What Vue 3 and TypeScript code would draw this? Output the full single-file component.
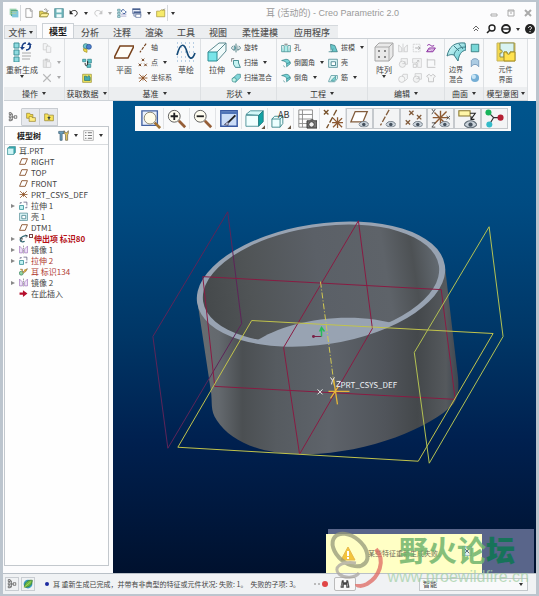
<script setup lang="ts">
import { ref } from 'vue'

interface Cmd { icon: string; label?: string; caret?: boolean; dim?: boolean; name?: string }
interface Block { big?: Cmd; list?: Cmd[]; lines?: string[] }
interface Group { title: string; caret: boolean; kind: string; blocks: Block[] }

const quick: Cmd[] = [
  { icon: 'brand', name: '应用' }, { icon: 'new', name: '新建' }, { icon: 'open', name: '打开' }, { icon: 'save', name: '保存' },
  { icon: 'undo', name: '撤消', caret: true }, { icon: 'redo', name: '重做', caret: true, dim: true },
  { icon: 'regen', name: '重新生成' }, { icon: 'windows', name: '窗口', caret: true }, { icon: 'folder', name: '关闭' },
]

const tabs = ['模型', '分析', '注释', '渲染', '工具', '视图', '柔性建模', '应用程序']
const activeTab = ref('模型')

const groups: Group[] = [
  { title: '操作', caret: true, kind: 'ops', blocks: [
    { big: { icon: 'regenbig', caret: true }, lines: ['重新生成'] },
    { list: [{ icon: 'copy', dim: true, name: '复制' }, { icon: 'paste', dim: true, caret: true, name: '粘贴' }, { icon: 'cross', dim: true, caret: true, name: '删除' }] },
  ] },
  { title: '获取数据', caret: true, kind: 'data', blocks: [
    { list: [{ icon: 'udf', name: '用户定义特征' }, { icon: 'copygeom', name: '复制几何' }, { icon: 'shrink', name: '收缩包络' }] },
  ] },
  { title: '基准', caret: true, kind: 'datum', blocks: [
    { big: { icon: 'planebig' }, lines: ['平面'] },
    { list: [{ icon: 'axis', label: '轴' }, { icon: 'points', label: '点', caret: true }, { icon: 'csys', label: '坐标系' }] },
    { big: { icon: 'sketch' }, lines: ['草绘'] },
  ] },
  { title: '形状', caret: true, kind: 'shape', blocks: [
    { big: { icon: 'extrudebig' }, lines: ['拉伸'] },
    { list: [{ icon: 'revolve', label: '旋转' }, { icon: 'sweep', label: '扫描', caret: true }, { icon: 'blend', label: '扫描混合' }] },
  ] },
  { title: '工程', caret: true, kind: 'eng', blocks: [
    { list: [{ icon: 'hole', label: '孔' }, { icon: 'round', label: '倒圆角', caret: true }, { icon: 'round', label: '倒角', caret: true }] },
    { list: [{ icon: 'draft', label: '拔模', caret: true }, { icon: 'shell', label: '壳' }, { icon: 'rib', label: '筋', caret: true }] },
  ] },
  { title: '编辑', caret: true, kind: 'edit', blocks: [
    { big: { icon: 'pattern', caret: true }, lines: ['阵列'] },
    { list: [{ icon: 'mirror', dim: true, name: '镜像' }, { icon: 'merge', dim: true, name: '合并' }, { icon: 'intersect', dim: true, name: '相交' }] },
    { list: [{ icon: 'extend', dim: true, name: '延伸' }, { icon: 'offset', dim: true, name: '偏移' }, { icon: 'merge', dim: true, name: '加厚' }] },
    { list: [{ icon: 'project', name: '投影' }, { icon: 'trim', dim: true, name: '修剪' }, { icon: 'solidify', dim: true, name: '实体化' }] },
  ] },
  { title: '曲面', caret: true, kind: 'surf', blocks: [
    { big: { icon: 'boundary' }, lines: ['边界', '混合'] },
    { list: [{ icon: 'fill', name: '填充' }, { icon: 'style', name: '造型' }, { icon: 'sphere', name: '自由式' }] },
  ] },
  { title: '模型意图', caret: true, kind: 'intent', blocks: [
    { big: { icon: 'component' }, lines: ['元件', '界面'] },
  ] },
]

const viewTools = [
  ['fit', '重新调整'], ['zoomin', '放大'], ['zoomout', '缩小'], ['repaint', '重画'], ['display', '显示样式'],
  ['views', '已命名视图'], ['manager', '视图管理器'], ['datums', '基准显示'], ['showplane', '平面显示'],
  ['showaxis', '轴显示'], ['showpoint', '点显示'], ['showcsys', '坐标系显示'], ['shownote', '注释显示'], ['spin', '旋转中心'],
]

interface Node { icon: string; text: string; fold?: boolean; state?: 'failed' | 'child' }
const nodes: Node[] = [
  { icon: 'plane', text: 'RIGHT' }, { icon: 'plane', text: 'TOP' }, { icon: 'plane', text: 'FRONT' },
  { icon: 'csys', text: 'PRT_CSYS_DEF' }, { icon: 'extrude', text: '拉伸 1', fold: true }, { icon: 'shell', text: '壳 1' },
  { icon: 'plane', text: 'DTM1' }, { icon: 'protrusion', text: '伸出项 标识80', fold: true, state: 'failed' },
  { icon: 'mirrortree', text: '镜像 1', fold: true }, { icon: 'extrude', text: '拉伸 2', fold: true, state: 'child' },
  { icon: 'ear', text: '耳 标识134', state: 'child' }, { icon: 'mirrortree', text: '镜像 2', fold: true }, { icon: 'insert', text: '在此插入' },
]
const filter = ref('智能')
const notice = ref(true)
</script>

<template>
  <svg class="defs" aria-hidden="true">
    <defs>
      <linearGradient id="cyan" x1="0" y1="0" x2="1" y2="1"><stop offset="0" stop-color="#e4ffff" /><stop offset="1" stop-color="#55c4cc" /></linearGradient>
      <symbol id="brand" viewBox="0 0 16 16"><path d="M1 1h11v10H1z" fill="#9fd4b0" /><path d="M3 3h11v10H3z" fill="#58a888" /><path d="M5 5h10v10H5z" fill="#7fc7dd" /><path d="M3 6h9M3 9h9" stroke="#c5d98a" /></symbol>
      <symbol id="new" viewBox="0 0 16 16"><path d="M3 1h7l3 3v11H3z" fill="#fff" stroke="#777" /><path d="M10 1v4h3" fill="none" stroke="#777" /></symbol>
      <symbol id="open" viewBox="0 0 16 16"><path d="M1 14V5h5l1 2h6v7z" fill="#e6d45c" stroke="#7d742a" /><path d="M1 14l3-5h12l-3 5z" fill="#fff3a0" stroke="#7d742a" /><path d="M8 3c3-3 5-1 5 2m-2-1 2 2 2-2" fill="none" stroke="#555" /></symbol>
      <symbol id="save" viewBox="0 0 16 16"><path d="M1 1h14v14H1z" fill="#6fb5bb" stroke="#3d7f88" /><path d="M4 2h8v5H4zM4 10h8v5H4z" fill="#f1fbfb" /></symbol>
      <symbol id="undo" viewBox="0 0 16 16"><path d="M2 8c3-6 12-5 11 1-1 3-3 4-4 4" fill="none" stroke="#222" stroke-width="1.6" /><path d="M1 3v7h6z" fill="#222" /></symbol>
      <symbol id="redo" viewBox="0 0 16 16"><path d="M14 8C11 2 2 3 3 9c1 3 3 4 4 4" fill="none" stroke="#777" stroke-width="1.6" /><path d="M15 3v7H9z" fill="#777" /></symbol>
      <symbol id="regen" viewBox="0 0 16 16"><path d="M1 2h4v3H1zM1 7h4v3H1zM1 12h4v3H1z" fill="#bde6ec" stroke="#45808c" /><path d="M7 6c0-4 4-4 5-2M14 5c1 4-3 5-5 3" fill="none" stroke="#234b8f" stroke-width="1.6" /><path d="M6 10h9M6 13h9" stroke="#88b" /></symbol>
      <symbol id="windows" viewBox="0 0 16 16"><path d="M1 1h12v8H1zM3 6h11v7H3z" fill="#e8edf7" stroke="#496191" /><path d="M1 2h12M3 7h11" stroke="#496191" stroke-width="2" /><path d="M6 10h8v5H6z" fill="#fff" stroke="#496191" /></symbol>
      <symbol id="folder" viewBox="0 0 16 16"><path d="M1 14V5h5l2-2h6v11z" fill="#f6ea6a" stroke="#9b8a2a" /><path d="M11 4l3-3" stroke="#555" /></symbol>
      <symbol id="regenbig" viewBox="0 0 20 20"><path d="M2 1h5v5H2zM2 8h5v5H2zM2 15h5v5H2z" fill="#8fdbe0" stroke="#3c9098" /><path d="M10 6c0-4 2-5 4-5M18 2c1 4-1 6-4 6" fill="none" stroke="#1b3f86" stroke-width="1.6" /><path d="M8 5h5l-3 3zM15 3h5l-3-3z" fill="#1b3f86" /><path d="M10 11h9M10 14h9M10 17h8" stroke="#aaa" /></symbol>
      <symbol id="copy" viewBox="0 0 16 16"><path d="M2 1h5l2 2v8H2z" fill="#eee" stroke="#777" /><path d="M7 5h5l2 2v8H7z" fill="#eee" stroke="#777" /></symbol>
      <symbol id="paste" viewBox="0 0 16 16"><path d="M2 3h10v12H2z" fill="#ccc" stroke="#777" /><path d="M5 1h4v3H5z" fill="#777" /><path d="M7 6h5l2 2v7H7z" fill="#f4f4f4" stroke="#777" /></symbol>
      <symbol id="cross" viewBox="0 0 16 16"><path d="M2 2l12 12M14 2L2 14" stroke="#555" stroke-width="1.7" /></symbol>
      <symbol id="udf" viewBox="0 0 16 16"><circle cx="6" cy="5" r="4" fill="#6ec5cb" stroke="#226a72" /><circle cx="11" cy="6" r="4" fill="#4b7fd0" stroke="#234a85" /><path d="M2 9l6 1v5l-5-2z" fill="#f4e050" stroke="#94851d" /></symbol>
      <symbol id="copygeom" viewBox="0 0 16 16"><path d="M1 2h5v4H1zM9 2h6v6H9zM8 10h6v5H8z" fill="#5cc2c8" stroke="#23767e" /><path d="M5 8c0 5 2 6 4 2M9 5v5" fill="none" stroke="#222" stroke-width="1.5" /></symbol>
      <symbol id="shrink" viewBox="0 0 16 16"><path d="M1 2h14v13H1z" fill="#f0e65e" stroke="#90862c" /><path d="M4 5h3l1 2 3-3 2 3v5H4z" fill="#44a9ad" stroke="#1f6a70" /></symbol>
      <symbol id="planebig" viewBox="0 0 20 20"><path d="M6 4h14l-6 12H0z" fill="#fffdf8" stroke="#79431d" stroke-width="1.6" /></symbol>
      <symbol id="plane" viewBox="0 0 16 16"><path d="M5 3h10l-4 10H1z" fill="#fff" stroke="#87502a" stroke-width="1.6" /></symbol>
      <symbol id="axis" viewBox="0 0 16 16"><path d="M13 1L3 15" stroke="#74431f" stroke-width="1.8" stroke-dasharray="5 2" /></symbol>
      <symbol id="points" viewBox="0 0 16 16"><path d="M6 1l4 4m0-4L6 5M1 9l4 4m0-4l-4 4M10 9l4 4m0-4l-4 4" stroke="#74431f" stroke-width="1.6" /></symbol>
      <symbol id="csys" viewBox="0 0 16 16"><path d="M2 2l12 12M14 2L2 14M1 8h14M8 4v8" stroke="#8b4c1e" stroke-width="1.4" /></symbol>
      <symbol id="sketch" viewBox="0 0 20 20"><path d="M1 1h18M1 5h18M1 10h18M1 15h18M1 19h18" stroke="#7aa6cf" stroke-dasharray="1 3" /><path d="M1 13C5-2 9 3 11 10s5 9 8 1" fill="none" stroke="#164b78" stroke-width="1.7" /></symbol>
      <symbol id="extrudebig" viewBox="0 0 20 20"><path d="M1 10L12 1h7v8l-9 10" fill="#f1fbfb" stroke="#5b8a90" /><path d="M10 10l9-9" stroke="#5b8a90" /><path d="M1 10h9v9H1z" fill="#79e5e9" stroke="#2c8d94" /></symbol>
      <symbol id="extrude" viewBox="0 0 16 16"><path d="M1 8h7v7H1z" fill="#c4f3f4" stroke="#25858c" stroke-width="1.3" /><path d="M2 5V3h3M8 2h6v6M14 10v2h-3" fill="none" stroke="#557" stroke-width="1.3" /></symbol>
      <symbol id="revolve" viewBox="0 0 16 16"><path d="M3 5c-4 3-1 6 2 6M13 5c4 3 1 6-3 6M8 1v14" fill="none" stroke="#47777d" stroke-width="1.5" /><path d="M5 4l3 4-3 4zM11 4v8" fill="#77c6cb" stroke="#47777d" /></symbol>
      <symbol id="sweep" viewBox="0 0 16 16"><path d="M4 4h8v4l3 7H7L4 10z" fill="#c6f3f2" stroke="#287b81" stroke-width="1.3" /><path d="M1 1h4M1 1v5" stroke="#444" /></symbol>
      <symbol id="blend" viewBox="0 0 16 16"><path d="M2 9l8-7h5v5l-8 8z" fill="#81d5d8" stroke="#2a7e84" /><circle cx="5" cy="11" r="3.5" fill="#bdf4e6" stroke="#2a7e84" /></symbol>
      <symbol id="hole" viewBox="0 0 16 16"><path d="M1 4h4v10h6V4h4M1 4v10h4M15 4v10h-4" fill="#afeeea" stroke="#287b81" /><path d="M5 2h6M8 1v4" stroke="#666" /></symbol>
      <symbol id="round" viewBox="0 0 16 16"><path d="M1 4l7-2c5 0 7 4 7 7l-6 5V9C9 6 5 5 1 4z" fill="#77d4d6" stroke="#24757c" /><path d="M9 9l6-2M4 12l2 3" stroke="#24757c" /></symbol>
      <symbol id="draft" viewBox="0 0 16 16"><path d="M4 2l7 2 4 10H5z" fill="#69c7ca" stroke="#22676e" /><path d="M1 14h5l2-5" fill="#cdeff0" stroke="#22676e" /></symbol>
      <symbol id="shell" viewBox="0 0 16 16"><path d="M1 2h14v13H1z" fill="#ddf6f7" stroke="#45818b" stroke-width="1.2" /><path d="M5 6h7v6H5z" fill="#fff" stroke="#45818b" stroke-width="1.4" /></symbol>
      <symbol id="rib" viewBox="0 0 16 16"><path d="M1 13l4-9h10v5l-4 5H1z" fill="#def7f5" stroke="#34818a" /><path d="M5 12l7-7v5l-3 3z" fill="#7fd5d0" stroke="#34818a" /></symbol>
      <symbol id="pattern" viewBox="0 0 20 20"><path d="M1 5l4-4h14v13l-4 5H1z" fill="#e9e9e9" stroke="#a6a6a6" /><path d="M15 5l4-4M1 5h14v14" fill="none" stroke="#aaa" /><path d="M4 8h2v2H4zM10 8h2v2h-2zM4 14h2v2H4zM10 14h2v2h-2z" fill="#888" /></symbol>
      <symbol id="mirror" viewBox="0 0 16 16"><path d="M8 1v14M1 3l5 5v6H1zM15 3l-5 5v6h5z" fill="#eee" stroke="#666" /></symbol>
      <symbol id="mirrortree" viewBox="0 0 16 16"><path d="M8 1v14" stroke="#555" stroke-dasharray="3 1" /><path d="M1 2l5 5v7H1zM15 2l-5 5v7h5z" fill="#f1e6fa" stroke="#8b56ac" /></symbol>
      <symbol id="merge" viewBox="0 0 16 16"><path d="M5 1h10v9H5z" fill="#eee" stroke="#666" /><circle cx="7" cy="10" r="5" fill="#e8e8e8" stroke="#666" /><path d="M7 9h4V5" fill="none" stroke="#666" /></symbol>
      <symbol id="intersect" viewBox="0 0 16 16"><path d="M8 2h7v7l-3 3H6V8z" fill="#eee" stroke="#666" /><circle cx="6" cy="10" r="5" fill="#f2f2f2" stroke="#666" /></symbol>
      <symbol id="extend" viewBox="0 0 16 16"><path d="M2 2h11v12H2z" fill="none" stroke="#777" stroke-dasharray="3 1" /><path d="M5 8h8m-3-3l3 3-3 3" fill="none" stroke="#222" stroke-width="1.3" /></symbol>
      <symbol id="offset" viewBox="0 0 16 16"><path d="M1 1h14v14H9V8H1z" fill="#eee" stroke="#777" /><path d="M2 10h5v5H2zM6 8l5-4m-3 0h3v3" fill="none" stroke="#555" /></symbol>
      <symbol id="project" viewBox="0 0 16 16"><path d="M2 4c5-5 5 4 11 0M1 14l4-6h10l-4 6z" fill="#f7e9fb" stroke="#86299c" stroke-width="1.6" /><path d="M4 12c3-4 4 2 8-2" fill="none" stroke="#86299c" /></symbol>
      <symbol id="trim" viewBox="0 0 16 16"><path d="M2 1v14h13M2 3h12v9" fill="none" stroke="#666" stroke-width="1.3" /></symbol>
      <symbol id="solidify" viewBox="0 0 16 16"><path d="M1 5l4-3 3 3 3-3 4 3-3 3v6H4V8z" fill="#f2f2f2" stroke="#666" stroke-width="1.3" /></symbol>
      <symbol id="boundary" viewBox="0 0 20 20"><path d="M1 14C3 5 8 0 19 1l1 7c-5 1-7 5-8 11L8 13C5 12 3 13 1 14z" fill="url(#cyan)" stroke="#3c7e87" /><path d="M8 13C9 8 13 5 20 5M8 4l5 5M13 2l4 5" fill="none" stroke="#3c7e87" /></symbol>
      <symbol id="fill" viewBox="0 0 16 16"><path d="M2 2h12v12H2z" fill="#78d7d7" stroke="#2a7378" stroke-width="1.3" /></symbol>
      <symbol id="style" viewBox="0 0 16 16"><path d="M2 14V4c3-4 9-4 12 0v10c-3-5-9-5-12 0z" fill="#accce3" stroke="#577fa6" /></symbol>
      <symbol id="sphere" viewBox="0 0 16 16"><circle cx="8" cy="8" r="6.5" fill="#74aed5" /><circle cx="6" cy="6" r="3.5" fill="#c6e4f5" /></symbol>
      <symbol id="component" viewBox="0 0 20 20"><path d="M1 1h18v18H1z" fill="#f4d94e" stroke="#c4b462" /><path d="M4 1h14v9h-4c1 3-4 3-3 0H8v5H4v-4c3 1 3-4 0-3z" fill="#d8f3f2" stroke="#8d8f50" /><path d="M8 10h3c-1 3 4 3 3 0h5v9H8z" fill="#ffe24f" stroke="#a38b25" /></symbol>
      <symbol id="fit" viewBox="0 0 22 22"><path d="M1 2h17v16H1z" fill="#e9f0fc" stroke="#4160a0" stroke-width="1.5" /><circle cx="10" cy="10" r="6.5" fill="#fffce9" stroke="#84806c" /><path d="M15 15l6 6" stroke="#a17132" stroke-width="3" /></symbol>
      <symbol id="zoomin" viewBox="0 0 22 22"><circle cx="8" cy="8" r="6.5" fill="#fffdf0" stroke="#555" /><path d="M4 8h8M8 4v8" stroke="#222" stroke-width="2" /><path d="M13 13l7 7" stroke="#955e37" stroke-width="3" /></symbol>
      <symbol id="zoomout" viewBox="0 0 22 22"><circle cx="8" cy="8" r="6.5" fill="#fffdf0" stroke="#555" /><path d="M4 8h8" stroke="#222" stroke-width="2" /><path d="M13 13l7 7" stroke="#955e37" stroke-width="3" /></symbol>
      <symbol id="repaint" viewBox="0 0 22 22"><path d="M2 2h18v17H2z" fill="#cbdcf7" stroke="#3858a2" stroke-width="1.6" /><path d="M2 4h18" stroke="#5074b7" stroke-width="3" /><path d="M18 7l-8 8" stroke="#222" stroke-width="2" /><path d="M10 14l-4 3 4 1z" fill="#fff" stroke="#446" /></symbol>
      <symbol id="display" viewBox="0 0 22 22"><path d="M1 6l5-4h14l-5 5z" fill="#d3f7f8" stroke="#4b9097" /><path d="M1 7h14v12H1z" fill="#f1ffff" stroke="#4b9097" /><path d="M15 7l5-5v12l-5 5z" fill="#13a3a5" stroke="#247b80" /><path d="M22 18v4h-4z" fill="#654" /></symbol>
      <symbol id="views" viewBox="0 0 22 22"><path d="M1 11l3-3h9v8l-3 4H1z" fill="#ecffff" stroke="#3b858a" /><path d="M10 11l3-3M1 11h9v9" fill="none" stroke="#3b858a" /><path d="M22 18v4h-4z" fill="#654" /></symbol>
      <symbol id="manager" viewBox="0 0 22 22"><path d="M2 1h15v19H2zM2 6h15M2 11h15M2 16h15M6 1v19" fill="#fff" stroke="#8b8b8b" /><path d="M11 13h3l1-1h3l1 1h3v8H11z" fill="#777" stroke="#333" /><circle cx="16" cy="17" r="3" fill="#eee" stroke="#333" /></symbol>
      <symbol id="datums" viewBox="0 0 22 22"><path d="M1 1l5 5m0-5L1 6M15 1L4 21" stroke="#765029" stroke-width="1.5" stroke-dasharray="7 2" /><path d="M11 10l10 10M21 10L11 20M10 15h12M16 9v12" stroke="#8c5932" stroke-width="1.4" /></symbol>
      <symbol id="eye" viewBox="0 0 12 7"><path d="M0 4c3-5 9-5 12 0-3 4-9 4-12 0z" fill="#c9d2da" stroke="#68737d" /><circle cx="6" cy="4" r="2" fill="#44515e" /></symbol>
      <symbol id="showplane" viewBox="0 0 22 22"><path d="M6 3h14l-5 12H1z" fill="#fff" stroke="#825c3c" stroke-width="1.5" /><use href="#eye" x="10" y="14" width="12" height="7" /></symbol>
      <symbol id="showaxis" viewBox="0 0 22 22"><path d="M14 1L4 19" stroke="#825c3c" stroke-width="1.5" stroke-dasharray="7 2" /><use href="#eye" x="10" y="14" width="12" height="7" /></symbol>
      <symbol id="showpoint" viewBox="0 0 22 22"><path d="M6 2l5 5m0-5L6 7M2 13l5 5m0-5l-5 5M15 7l5 5m0-5l-5 5" stroke="#825c3c" stroke-width="1.5" /><use href="#eye" x="10" y="14" width="12" height="7" /></symbol>
      <symbol id="showcsys" viewBox="0 0 22 22"><path d="M4 4l13 13M18 3L4 17M2 10h18M11 2v16" stroke="#8c5932" stroke-width="1.6" /><path d="M1 0l2 3 2-3M3 3L1 6M18 8l4 4m0-4l-4 4M1 16h4l-4 5h4" fill="none" stroke="#444" /><use href="#eye" x="10" y="14" width="12" height="7" /></symbol>
      <symbol id="shownote" viewBox="0 0 22 22"><path d="M1 2h13v6H1z" fill="#fff6a8" stroke="#86742a" stroke-width="1.2" /><path d="M14 5h6l-5 7m0-4v4h4" fill="none" stroke="#222" stroke-width="1.2" /><use href="#eye" x="7" y="13" width="15" height="9" /></symbol>
      <symbol id="spin" viewBox="0 0 22 22"><path d="M4 4l6 6-5 8M10 10h9" fill="none" stroke="#333" stroke-width="1.3" /><circle cx="4" cy="4" r="3.5" fill="#17b45a" /><circle cx="5" cy="18" r="3.5" fill="#34bbc9" /><circle cx="18" cy="10" r="3.5" fill="#b51f33" /></symbol>
      <symbol id="protrusion" viewBox="0 0 16 16"><path d="M15 3C9 2 3 6 2 10c0 4 5 5 8 3" fill="none" stroke="#2d6571" stroke-width="2" /><path d="M1 7l5 1-2 5M12 1l3 3-3 2" fill="none" stroke="#333" stroke-width="1.3" /></symbol>
      <symbol id="ear" viewBox="0 0 16 16"><circle cx="4" cy="11" r="3.5" fill="#93d5a0" stroke="#267052" /><path d="M2 4h4v4M6 9c5-1 4-5 9-6l-3 5-5 3" fill="#f0cb5c" stroke="#714b2a" /><circle cx="11" cy="6" r="2" fill="#d2a334" /></symbol>
      <symbol id="insert" viewBox="0 0 16 16"><path d="M1 6h6V2l8 6-8 6v-4H1z" fill="#b50e2c" /></symbol>
      <symbol id="part" viewBox="0 0 16 16"><path d="M1 4l3-3h11v10l-3 4H1z" fill="#35aeb3" stroke="#347c84" /><path d="M1 4h11v11H1z" fill="#cef5f6" stroke="#4b9aa0" /></symbol>
      <symbol id="tree" viewBox="0 0 16 16"><path d="M2 1h3v3H2zM2 6h3v3H2zM2 11h3v3H2zM10 6h4v4h-4z" fill="#fff" stroke="#333" /><path d="M5 3h2v10H5M7 8h3" fill="none" stroke="#333" /></symbol>
      <symbol id="folders" viewBox="0 0 16 16"><path d="M1 2h5l1 2h4v6H1z" fill="#f7df4b" stroke="#8c7825" /><path d="M5 7h4l1 2h5v6H5z" fill="#ffed82" stroke="#8c7825" /></symbol>
      <symbol id="favorite" viewBox="0 0 16 16"><path d="M1 3h5l1 2h8v9H1z" fill="#f8e35a" stroke="#8c7825" /><path d="M8 6l1 2h2l-2 2 1 3-2-2-2 2 1-3-2-2h2z" fill="#344" /></symbol>
      <symbol id="tools" viewBox="0 0 16 16"><path d="M1 2h8v3H6v10H3V5H1z" fill="#6aa0bd" stroke="#395c73" /><path d="M9 1v4l2 2v8h3V7l1-2V1l-2 3h-2z" fill="#e9c85e" stroke="#65604a" /></symbol>
      <symbol id="list" viewBox="0 0 16 16"><path d="M1 1h14v14H1z" fill="#fff" stroke="#999" /><path d="M3 4h2M3 8h2M3 12h2M7 4h6M7 8h6M7 12h6" stroke="#555" stroke-width="1.2" /></symbol>
      <symbol id="globe" viewBox="0 0 16 16"><circle cx="8" cy="8" r="7" fill="#3b9fc2" /><path d="M2 13C3 5 8 1 15 2c0 7-5 12-13 11z" fill="#64b645" stroke="#376d2f" /><path d="M1 14L13 4" stroke="#d8e85c" /></symbol>
      <symbol id="binoculars" viewBox="0 0 16 16"><path d="M3 2h3v3h4V2h3l2 10v2h-5v-5H6v5H1v-2z" fill="#444" /><path d="M3 6l-1 6h2V6zM12 6l-1 6h2V6z" fill="#aaa" /></symbol>
    </defs>
  </svg>

  <div class="window">
    <header class="titlebar">
      <div class="quick">
        <template v-for="q in quick" :key="q.icon">
          <button class="tool" :class="{ dim: q.dim }" type="button" :aria-label="q.name"><svg class="ico"><use :href="'#' + q.icon" /></svg></button>
          <i v-if="q.caret" class="caret" :class="{ dim: q.dim }"></i>
          <i v-if="q.icon === 'brand' || q.icon === 'folder'" class="rule"></i>
        </template>
        <i class="caret"></i>
      </div>
      <h1>耳 (活动的) - Creo Parametric 2.0</h1>
      <div class="winbtns">
        <button type="button" aria-label="最小化"><svg viewBox="0 0 8 8"><path d="M1 5h6v2H1z" /></svg></button>
        <button type="button" aria-label="最大化"><svg viewBox="0 0 8 8"><path d="M1 1h6v6H1zM1 2h6M3 4h2" /></svg></button>
        <button type="button" aria-label="关闭"><svg viewBox="0 0 8 8"><path d="M1 1l6 6M7 1L1 7" stroke-width="2" /></svg></button>
      </div>
    </header>

    <nav class="tabs">
      <button class="tab file" type="button">文件<i class="caret"></i></button>
      <button v-for="t in tabs" :key="t" type="button" class="tab" :class="{ active: t === activeTab, wide: t.length > 2 }" @click="activeTab = t">{{ t }}</button>
      <div class="helpers">
        <button type="button" aria-label="折叠"><svg viewBox="0 0 10 10"><path d="M2 5l3-3 3 3M3 7l2-2 2 2" fill="none" stroke="#666" /></svg></button>
        <button type="button" aria-label="搜索"><svg viewBox="0 0 10 10"><circle cx="6" cy="4" r="3" fill="none" stroke="#222" stroke-width="1.4" /><path d="M4 6L1 9" stroke="#222" stroke-width="1.6" /></svg></button>
        <button type="button" aria-label="资源"><svg viewBox="0 0 10 10"><circle cx="5" cy="5" r="4" fill="none" stroke="#222" stroke-width="1.8" /><path d="M2 5h6" stroke="#222" stroke-width="1.4" /></svg></button>
        <i class="caret"></i>
        <button type="button" aria-label="帮助"><svg viewBox="0 0 10 10"><circle cx="5" cy="5" r="5" fill="#222" /><path d="M3.5 4c0-2 3-2 3 0 0 1-1.5 1-1.5 2M5 7v1.2" fill="none" stroke="#fff" /></svg></button>
      </div>
    </nav>

    <section class="ribbon">
      <div v-for="g in groups" :key="g.title" class="group" :class="g.kind">
        <div class="cmds">
          <template v-for="(b, i) in g.blocks" :key="i">
            <button v-if="b.big" class="big" type="button">
              <svg class="icobig"><use :href="'#' + b.big.icon" /></svg>
              <span class="lines"><span v-for="l in b.lines" :key="l">{{ l }}</span></span>
              <i v-if="b.big.caret" class="caret"></i>
            </button>
            <div v-else class="list">
              <button v-for="(c, j) in b.list" :key="j" class="cmd" type="button" :aria-label="c.label ?? c.name">
                <svg class="ico" :class="{ dim: c.dim }"><use :href="'#' + c.icon" /></svg><span v-if="c.label">{{ c.label }}</span>
                <i v-if="c.caret" class="caret" :class="{ dim: c.dim }"></i>
              </button>
            </div>
          </template>
        </div>
        <div class="gtitle">{{ g.title }}<i v-if="g.caret" class="caret"></i></div>
      </div>
    </section>

    <main class="body">
      <aside class="side">
        <div class="sidetabs">
          <button class="on" type="button" aria-label="模型树"><svg class="ico"><use href="#tree" /></svg></button>
          <button type="button" aria-label="文件夹浏览器"><svg class="ico"><use href="#folders" /></svg></button>
          <button type="button" aria-label="收藏夹"><svg class="ico"><use href="#favorite" /></svg></button>
        </div>
        <div class="panel">
          <div class="phead">
            <h2>模型树</h2>
            <button type="button" aria-label="设置"><svg class="ico"><use href="#tools" /></svg><i class="caret"></i></button>
            <button type="button" aria-label="显示"><svg class="ico"><use href="#list" /></svg><i class="caret"></i></button>
          </div>
          <div class="root"><svg class="ico"><use href="#part" /></svg>耳.PRT</div>
          <ul>
            <li v-for="n in nodes" :key="n.text" :class="n.state">
              <i class="fold" :class="{ shown: n.fold }"></i>
              <svg class="ico"><use :href="'#' + n.icon" /></svg><i v-if="n.state === 'failed'" class="mark"></i><span>{{ n.text }}</span>
            </li>
          </ul>
        </div>
      </aside>

      <section class="canvas">
        <div class="viewbar">
          <button v-for="v in viewTools" :key="v[0]" type="button" :aria-label="v[1]" :class="{ framed: v[0].startsWith('show') || v[0] === 'spin' }">
            <svg><use :href="'#' + v[0]" /><text v-if="v[0] === 'views'" x="7" y="9" font-size="9" fill="#333">AB</text></svg>
          </button>
        </div>
        <svg class="scene" viewBox="113 100 424 473">
          <defs>
            <linearGradient id="wall" x1="198" y1="0" x2="460" y2="0" gradientUnits="userSpaceOnUse">
              <stop offset="0" stop-color="#686d71" /><stop offset=".08" stop-color="#64696e" /><stop offset=".17" stop-color="#4b4f52" /><stop offset=".3" stop-color="#565b60" /><stop offset=".5" stop-color="#5e636a" /><stop offset=".72" stop-color="#50545a" /><stop offset=".84" stop-color="#44484b" /><stop offset=".95" stop-color="#55595d" /><stop offset="1" stop-color="#3b4550" />
            </linearGradient>
            <linearGradient id="inside" x1="203" y1="0" x2="440" y2="0" gradientUnits="userSpaceOnUse">
              <stop offset="0" stop-color="#45494b" /><stop offset=".2" stop-color="#505456" /><stop offset=".5" stop-color="#5b6067" /><stop offset=".78" stop-color="#5e6369" /><stop offset=".9" stop-color="#4d5154" /><stop offset="1" stop-color="#626970" />
            </linearGradient>
            <clipPath id="bore"><ellipse cx="321.5" cy="283" rx="120" ry="58" transform="rotate(-8.7 321.5 283)" /></clipPath>
          </defs>
          <path d="M197 297L211 390C213 402 210 410 217 420C232 443 265 455 308 454C370 453 432 427 454 404C460 396 460 384 458 370L446 268z" fill="url(#wall)" />
          <ellipse cx="321.5" cy="283.5" rx="125.6" ry="60.5" transform="rotate(-8.7 321.5 283.5)" fill="#98a3b2" />
          <ellipse cx="321.5" cy="283" rx="119.5" ry="57" transform="rotate(-8.7 321.5 283)" fill="url(#inside)" />
          <path d="M256 341C284 321 350 308 401 325L380 350H256z" fill="#98a3b2" clip-path="url(#bore)" />
          <g fill="none" stroke-width="1">
            <path d="M228 211l14 112-74 125-15-112z" stroke="#5d2458" />
            <path d="M203 276l239 13 14 110-241-13zM359 220l14 108-73 126-16-107z" stroke="#891b42" />
            <path d="M252 320l242 13-75 128-241-14z" stroke="#c2c44b" />
            <path d="M490 226l14 110-74 127-15-111z" stroke="#b4c252" />
            <path d="M321 281l14 106" stroke="#d2c951" stroke-dasharray="6 2 1 2" />
            <path d="M329 391h21M334 378l4 26M331 398l8-12" stroke="#e5b63a" stroke-width="1.3" />
            <path d="M318 389l5 5m0-5l-5 5M331 377l2 3 2-3M333 380l-1 4M337 381h4l-4 5h4" stroke="#eee" />
            <path d="M313 336h9" stroke="#7a2146" /><path d="M322 336v-9m-2 4l2-4 3 4" stroke="#28bd59" stroke-width="1.5" />
          </g>
          <circle cx="314" cy="336" r="1.5" fill="#792046" />
          <text x="341" y="388" class="cslabel">PRT_CSYS_DEF</text>
        </svg>
        <div class="veil"></div>
        <div v-if="notice" class="notice" role="alert">
          <svg class="warn" viewBox="0 0 16 16"><path d="M8 1l7 13H1z" fill="#f3c43b" stroke="#e6b84a" /><path d="M8 5v5M8 11v2" stroke="#fff" stroke-width="2" /></svg>
          <span>某些特征重新生成失败。</span>
          <button type="button" aria-label="关闭通知" @click="notice = false"><svg viewBox="0 0 8 8"><path d="M1 1l6 6M7 1L1 7" stroke="#345" /></svg></button>
        </div>
      </section>
    </main>

    <footer class="status">
      <button class="framed" type="button" aria-label="导航器"><svg class="ico"><use href="#tree" /></svg></button>
      <button class="framed" type="button" aria-label="浏览器"><svg class="ico"><use href="#globe" /></svg></button>
      <p><i class="bullet"></i>耳 重新生成已完成，并带有非典型的特征或元件状况: 失败: 1。&nbsp; 失败的子项: 3。</p>
      <div class="right">
        <i class="dots"></i><i class="red"></i>
        <button class="find" type="button" aria-label="查找"><svg class="ico"><use href="#binoculars" /></svg></button>
        <label class="pick"><select v-model="filter" aria-label="选择过滤器"><option>智能</option><option>几何</option></select><i class="caret"></i></label>
      </div>
    </footer>

    <div class="stamp">
      <svg viewBox="0 0 60 60"><g fill="none" stroke-width="4"><ellipse cx="22" cy="18" rx="20" ry="13" transform="rotate(40 22 18)" stroke="#95997a" /><path d="M28 31C12 29 5 36 11 42c6 5 16 4 20-1" stroke="#a9a5a0" stroke-width="3" /><path d="M48 17c10 12 3 28-9 35-6 3-10 2-10 0" stroke="#df6860" /></g></svg>
      <div><strong>野火论<b>坛</b></strong><span>www.proewildfire.cn</span></div>
    </div>
  </div>
</template>

<style>
body { margin: 0; }
</style>

<style scoped>
.defs { position: absolute; width: 0; height: 0; }
.window {
  position: relative; display: flex; flex-direction: column; min-height: 100vh; box-sizing: border-box;
  border: 3px solid #bcc5ce; border-top-width: 2px; border-bottom-width: 2px; background: #fcfcfd; color: #444;
  font: 9px/11px "Noto Sans CJK SC", "Noto Sans", sans-serif;
}
button { display: flex; align-items: center; padding: 0; border: 0; background: none; color: inherit; font: inherit; white-space: nowrap; }
h1, h2, p, ul { margin: 0; padding: 0; font: inherit; list-style: none; }
svg { display: block; flex: none; overflow: visible; }
.ico { width: 10px; height: 10px; }
.dim { opacity: 0.4; }
.caret { flex: none; border: 2px solid transparent; border-top: 3px solid #333; border-bottom: 0; }

.titlebar { display: flex; align-items: center; height: 22px; }
.quick { display: flex; align-items: center; gap: 5px; padding-left: 6px; }
.rule { width: 1px; height: 16px; margin: 0 -2px 0 -4px; background: #d5d8dc; }
h1 { flex: 1; text-align: center; font-family: "Liberation Sans", "Noto Sans CJK SC", sans-serif; color: #999; white-space: nowrap; }
.winbtns { display: flex; gap: 9px; padding-right: 4px; }
.winbtns svg { width: 8px; height: 8px; fill: none; stroke: #aaa; }

.tabs { display: flex; height: 15px; align-items: flex-end; margin: 0 1px; border-bottom: 1px solid #ccd1d6; box-sizing: border-box; }
.tab { height: 13px; justify-content: center; box-sizing: border-box; width: 32px; border-top: 1px solid #d5d9dd; background: #eceef0; color: #555; font-weight: 500; }
.tab.wide { width: 52px; }
.tab.file { gap: 2px; width: 33px; margin-right: 5px; border: 1px solid #d5d9dd; border-bottom: 0; }
.tab.active { height: 15px; border: 1px solid #ccd1d6; border-bottom: 0; background: #fcfcfd; font-weight: 700; color: #222; }
.helpers { display: flex; flex: 1; align-self: flex-start; align-items: center; justify-content: flex-end; gap: 5px; }
.helpers svg { width: 10px; height: 10px; }

.ribbon { display: grid; grid-template-columns: 61fr 44fr 92fr 76fr 91fr 77fr 39fr 44fr; margin: 0 8px 0 1px; background: #f8f9fa; border-bottom: 1px solid #cdd2d7; font-size: 8px; }
.group { display: flex; flex-direction: column; min-width: 0; border-right: 1px solid #dde0e3; }
.cmds { display: flex; height: 47px; padding: 1px 2px 0; gap: 4px; }
.big { flex-direction: column; justify-content: flex-start; padding-top: 2px; flex: none; }
.icobig { width: 20px; height: 20px; }
.lines { display: flex; flex-direction: column; padding-top: 2px; }
.surf .lines, .intent .lines { font-size: 7px; line-height: 10px; padding-top: 2px; }
.list { display: flex; flex-direction: column; font-size: 7px; }
.cmd { height: 15px; gap: 3px; }
.cmd .caret { margin-left: 2px; }
.gtitle { display: flex; align-items: center; justify-content: center; gap: 4px; height: 13px; background: #eceef0; color: #333; white-space: nowrap; }
.intent .gtitle { gap: 2px; }
.data .cmds, .intent .cmds { justify-content: center; }
.datum .cmds { padding-left: 5px; }
.shape .cmds { padding-left: 6px; }
.eng .cmds { padding-left: 4px; }
.edit .cmds { padding-left: 6px; }
.surf .cmds { padding-left: 1px; }

.body { display: flex; flex: 1; }
.side { display: flex; flex-direction: column; width: 110px; flex: none; padding: 7px 4px 7px 1px; box-sizing: border-box; font-size: 8px; }
.sidetabs { display: flex; }
.sidetabs button { width: 18px; height: 18px; justify-content: center; box-sizing: border-box; border: 1px solid #c9cdd2; border-left: 0; background: #e8eaee; }
.sidetabs .on { background: #fcfcfd; border-color: transparent #c9cdd2 transparent transparent; }
.panel { flex: 1; border: 1px solid #c3c8cd; background: #fefefe; }
.phead { display: flex; align-items: center; height: 17px; border-bottom: 1px solid #d8dbde; }
.phead h2 { width: 43px; padding-left: 12px; font-weight: 700; color: #222; }
.phead button { width: 26px; gap: 5px; }
.phead .ico { width: 11px; height: 11px; }
.root, li { display: flex; align-items: center; height: 11px; white-space: nowrap; }
.root { gap: 3px; padding-left: 2px; }
.root .ico, li .ico { width: 9px; height: 9px; }
li { gap: 3px; padding-left: 6px; }
.fold { width: 0; height: 0; margin-right: 1px; border: 2px solid transparent; border-right: 0; border-left-width: 4px; }
.fold.shown { border-left-color: #888; }
.failed { color: #b40f16; font-weight: 700; gap: 1px; }
.failed .ico { margin-left: 2px; }
.child { color: #b03a30; }
.mark { width: 2px; height: 2px; border: 1px solid #744; align-self: flex-start; margin-top: 1px; }

.canvas { position: relative; flex: 1; min-width: 0; overflow: hidden; background: linear-gradient(#00558d, #004b82 22%, #003666 50%, #00204f 72%, #00112e); }
.scene { position: absolute; inset: 0; width: 100%; height: 100%; }
.cslabel { font-size: 8px; fill: #eef2f5; }
.viewbar { position: relative; z-index: 1; display: flex; margin: 5px 25px 0 22px; padding: 2px 3px; background: #f9fafb; }
.viewbar button { flex: 1; height: 21px; justify-content: center; box-sizing: border-box; border-right: 1px solid #e1e3e6; }
.viewbar .framed { border: 1px solid #c5c9cd; background: #f3f4f5; }
.viewbar svg { width: 20px; height: 20px; }
.viewbar .framed svg { width: 19px; height: 19px; }
.veil { position: absolute; right: 2px; bottom: 0; width: 206px; height: 44px; background: #59658a; }
.notice { position: absolute; right: 54px; bottom: 0; display: flex; align-items: center; width: 156px; height: 39px; box-sizing: border-box; padding: 0 10px 0 14px; gap: 12px; background: #ffffc5; color: #6c6c55; font-size: 7px; }
.warn { width: 16px; height: 16px; }
.notice span { flex: 1; white-space: nowrap; }
.notice button { align-self: flex-start; padding: 1px; margin: 12px 0 0; border: 1px solid #a8bfd0; background: #e4eef0; }
.notice button svg { width: 6px; height: 6px; }

.status { display: flex; align-items: center; height: 20px; padding: 0 8px 0 2px; gap: 2px; border-top: 1px solid #b9c0c7; background: #f0f2f4; font-size: 7px; }
.status .framed { width: 14px; height: 14px; justify-content: center; border: 1px solid #c9cdd2; box-sizing: border-box; }
.status p { display: flex; align-items: center; gap: 4px; flex: 1; min-width: 0; padding-left: 8px; white-space: nowrap; color: #444; }
.bullet { width: 4px; height: 4px; border-radius: 50%; background: #1d2ba0; }
.right { display: flex; align-items: center; gap: 2px; }
.dots { width: 6px; height: 0; border-top: 2px dotted #bbb; }
.red { width: 6px; height: 6px; border-radius: 50%; background: #e04646; }
.find { width: 22px; height: 14px; margin-left: 4px; justify-content: center; border: 1px solid #bbb; border-radius: 2px; box-sizing: border-box; background: #f8f8f8; }
.pick { display: flex; align-items: center; box-sizing: border-box; width: 109px; height: 13px; margin-left: 61px; padding-right: 4px; border: 1px solid #c3c7cb; background: #f8f9fa; }
.pick select { appearance: none; flex: 1; min-width: 0; height: 11px; padding: 0 3px; border: 0; background: none; color: #444; font: inherit; }

.stamp { position: absolute; right: 7px; bottom: 2px; display: flex; align-items: flex-start; pointer-events: none; }
.stamp > svg { width: 60px; height: 60px; opacity: 0.75; }
.stamp div { display: flex; flex-direction: column; align-items: flex-end; gap: 2px; }
.stamp strong { padding-right: 14px; font-size: 29px; line-height: 34px; color: #71b56d; opacity: 0.85; }
.stamp b { color: #0c7651; }
.stamp span { font: 16px/18px "Liberation Sans", sans-serif; color: #a5d0a7; opacity: 0.75; }
</style>
